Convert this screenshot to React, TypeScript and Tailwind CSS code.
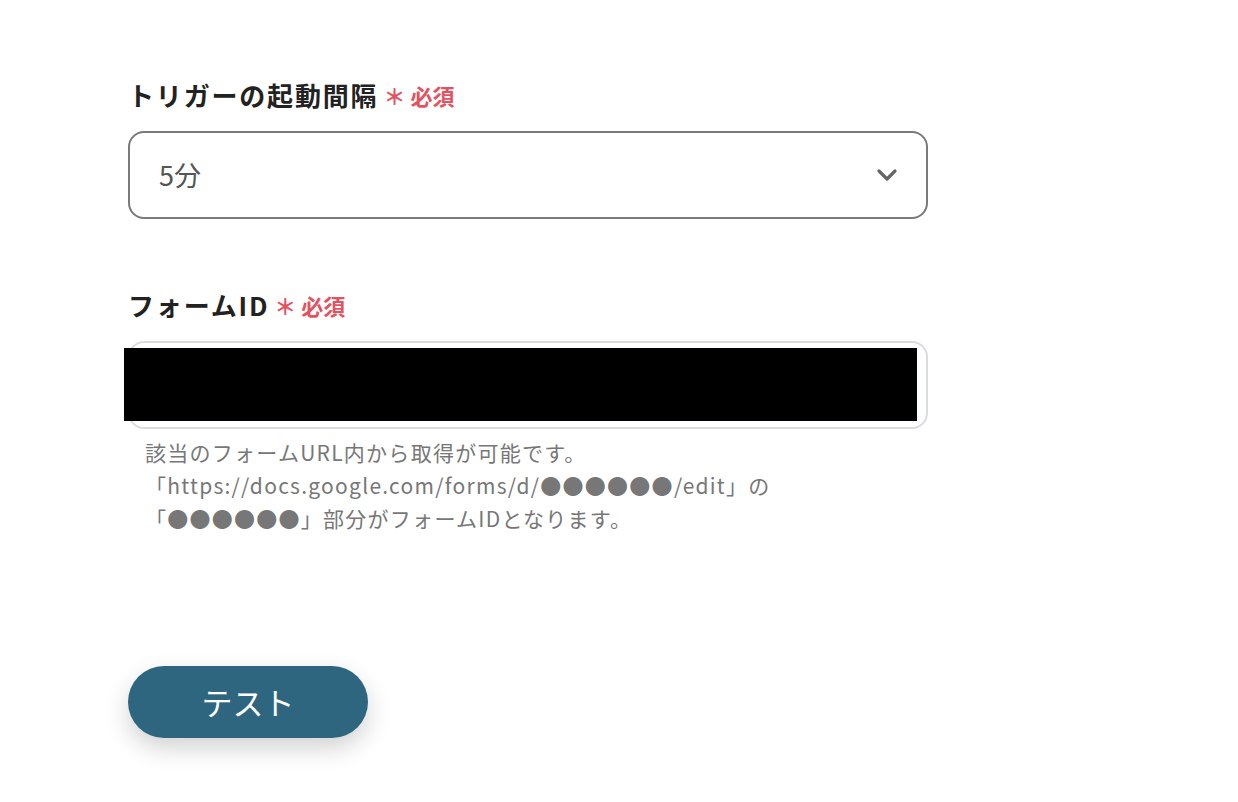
import React from 'react';

const font = { fontFamily: '"Noto Sans CJK JP", "Noto Sans", sans-serif' };

function Label({ text }: { text: string }) {
  return (
    <div className="flex h-[30px] items-center leading-[30px]">
      <span className="text-[26px] font-bold text-[#222] tracking-[0.07em]">{text}</span>
      <span className="ml-[5px] text-[22px] font-bold text-[#e5525f]">＊ 必須</span>
    </div>
  );
}

export default function App() {
  return (
    <div className="min-h-[802px] bg-white pl-[128px] pt-[80px]" style={font}>
      <div className="w-[800px]">
        <Label text="トリガーの起動間隔" />
        <div className="mt-[21px] flex h-[88px] items-center justify-between rounded-[16px] border-2 border-[#7a7a7a] pl-[29px] pr-[28px]">
          <span className="text-[27px] text-[#555]">5分</span>
          <svg width="22" height="14" viewBox="0 0 22 14" fill="none">
            <path d="M3 3l8 8 8-8" stroke="#666" strokeWidth="3.2" strokeLinecap="round" strokeLinejoin="round" />
          </svg>
        </div>

        <div className="mt-[71px]">
          <Label text="フォームID" />
        </div>
        <div className="relative mt-[21px] h-[88px] rounded-[16px] border-2 border-[#d9dcdf]">
          <div className="absolute left-[-6px] top-[5px] h-[73px] w-[793px] bg-black" />
        </div>

        <div className="mt-[7px] pl-[17px] text-[21px] leading-[33px] tracking-[0.06em] text-[#777]">
          <p>該当のフォームURL内から取得が可能です。</p>
          <p>「https://docs.google.com/forms/d/●●●●●●/edit」の</p>
          <p>「●●●●●●」部分がフォームIDとなります。</p>
        </div>

        <button className="mt-[131px] h-[72px] w-[240px] rounded-full bg-[#2e6680] text-[31px] text-white shadow-[0_10px_24px_rgba(0,0,0,0.18)]">
          テスト
        </button>
      </div>
    </div>
  );
}
